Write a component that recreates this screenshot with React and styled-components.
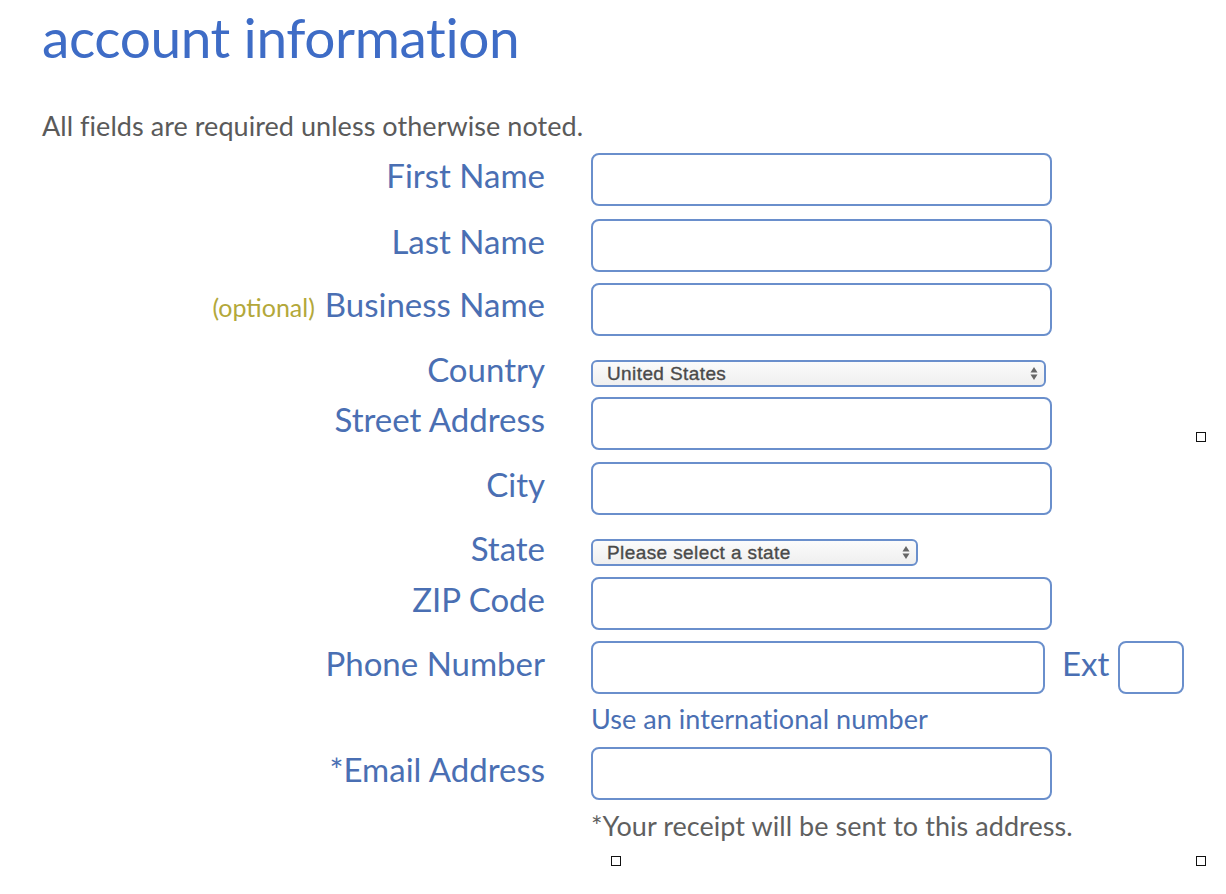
import React from "react";
import styled, { createGlobalStyle } from "styled-components";

const GlobalStyle = createGlobalStyle`
  body {
    margin: 0;
    background: #fff;
    font-family: Lato, "Open Sans", sans-serif;
  }
`;

const Page = styled.div`
  position: relative;
  width: 1226px;
  height: 894px;
  box-sizing: border-box;
  padding: 0 0 0 42px;
  overflow: hidden;
`;

const Title = styled.h1`
  margin: 0;
  padding-top: 4px;
  font-size: 55px;
  font-weight: 400;
  line-height: 66px;
  color: #3e6cc6;
  letter-spacing: -0.4px;
`;

const Intro = styled.p`
  margin: 41px 0 0;
  font-size: 27px;
  line-height: 30px;
  color: #5a5a5a;
  letter-spacing: 0.05px;
`;

const Form = styled.div`
  display: flex;
  flex-direction: column;
`;

const Row = styled.div`
  display: flex;
  align-items: center;
  margin-top: ${p => p.$mt}px;
`;

const Label = styled.label`
  width: 503px;
  margin-right: 46px;
  text-align: right;
  font-size: 33px;
  line-height: 32px;
  padding-bottom: 9px;
  color: #4a6fb3;
  white-space: nowrap;
`;

const Optional = styled.span`
  font-size: 25px;
  color: #b3a83a;
  margin-right: 10px;
`;

const TextInput = styled.input`
  width: ${p => p.$w || 461}px;
  height: 53px;
  box-sizing: border-box;
  border: 2px solid #6a8fcc;
  border-radius: 8px;
  background: #fff;
  outline: none;
  padding: 0 12px;
  font-size: 18px;
`;

const SelectWrap = styled.div`
  position: relative;
  width: ${p => p.$w}px;
  height: 27px;
`;

const Select = styled.select`
  appearance: none;
  width: 100%;
  height: 27px;
  box-sizing: border-box;
  border: 2px solid #6a8fcc;
  border-radius: 6px;
  background: linear-gradient(#fbfbfb, #efefef);
  padding: 0 0 0 14px;
  font-family: "Liberation Sans", Arial, sans-serif;
  font-size: 19px;
  font-weight: 400;
  letter-spacing: 0.4px;
  -webkit-text-stroke: 0.35px #4a4a4a;
  color: #4a4a4a;
  outline: none;
`;

const Arrows = styled.svg`
  position: absolute;
  right: 8px;
  top: 6px;
  pointer-events: none;
`;

const ExtLabel = styled.span`
  margin: 0 9px 0 17px;
  font-size: 33px;
  line-height: 32px;
  padding-bottom: 9px;
  color: #4a6fb3;
`;

const Note = styled.p`
  margin: ${p => p.$mt}px 0 0 549px;
  font-size: 27px;
  line-height: 30px;
  color: ${p => (p.$muted ? "#5f5f5f" : "#4a6fb3")};
  letter-spacing: 0.05px;
`;

const Marker = styled.span`
  position: absolute;
  left: ${p => p.$x}px;
  top: ${p => p.$y}px;
  width: 10px;
  height: 10px;
  box-sizing: border-box;
  border: 1.5px solid #111;
  background: #fff;
`;

const SelectBox = ({ width, value }) => (
  <SelectWrap $w={width}>
    <Select defaultValue={value}>
      <option>{value}</option>
    </Select>
    <Arrows width="8" height="15" viewBox="0 0 8 15">
      <path d="M4 1 L7.5 6.5 L0.5 6.5 Z" fill="#666" />
      <path d="M4 14 L7.5 8.5 L0.5 8.5 Z" fill="#666" />
    </Arrows>
  </SelectWrap>
);

const App = () => (
  <Page>
    <GlobalStyle />
    <Title>account information</Title>
    <Intro>All fields are required unless otherwise noted.</Intro>

    <Form>
      <Row $mt={12}>
        <Label>First Name</Label>
        <TextInput />
      </Row>
      <Row $mt={13}>
        <Label>Last Name</Label>
        <TextInput />
      </Row>
      <Row $mt={11}>
        <Label>
          <Optional>(optional)</Optional>Business Name
        </Label>
        <TextInput />
      </Row>
      <Row $mt={17}>
        <Label>Country</Label>
        <SelectBox width={455} value="United States" />
      </Row>
      <Row $mt={3}>
        <Label>Street Address</Label>
        <TextInput />
      </Row>
      <Row $mt={12}>
        <Label>City</Label>
        <TextInput />
      </Row>
      <Row $mt={17}>
        <Label>State</Label>
        <SelectBox width={327} value="Please select a state" />
      </Row>
      <Row $mt={4}>
        <Label>ZIP Code</Label>
        <TextInput />
      </Row>
      <Row $mt={11}>
        <Label>Phone Number</Label>
        <TextInput $w={454} />
        <ExtLabel>Ext</ExtLabel>
        <TextInput $w={66} />
      </Row>
      <Note $mt={10}>Use an international number</Note>
      <Row $mt={13}>
        <Label>*Email Address</Label>
        <TextInput />
      </Row>
      <Note $mt={11} $muted>
        *Your receipt will be sent to this address.
      </Note>
    </Form>

    <Marker $x={1196} $y={432} />
    <Marker $x={611} $y={856} />
    <Marker $x={1196} $y={856} />
  </Page>
);

export default App;
